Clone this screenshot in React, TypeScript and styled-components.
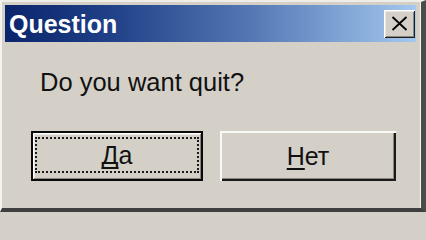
import styled, { createGlobalStyle } from 'styled-components'

const GlobalStyle = createGlobalStyle`
  html,
  body {
    margin: 0;
    padding: 0;
    background: #d4d0c8;
  }

  * {
    box-sizing: border-box;
  }
`

function CloseIcon() {
  return (
    <svg viewBox="0 0 17 15" width="17" height="15" fill="none" aria-hidden="true">
      <path d="M1.5 1L15.5 14M15.5 1L1.5 14" stroke="#000" strokeWidth="1.8" />
    </svg>
  )
}

export default function App() {
  return (
    <>
      <GlobalStyle />
      <Window role="dialog" aria-label="Question">
        <TitleBar>
          <Title>Question</Title>
          <CloseButton type="button" aria-label="Close">
            <CloseIcon />
          </CloseButton>
        </TitleBar>

        <Body>
          <Message>Do you want quit?</Message>
          <ButtonRow>
            <DialogButton type="button" $default $width={172}>
              <FocusRing>
                <Label>
                  <u>Д</u>а
                </Label>
              </FocusRing>
            </DialogButton>
            <DialogButton type="button" $width={176}>
              <Label>
                <u>Н</u>ет
              </Label>
            </DialogButton>
          </ButtonRow>
        </Body>
      </Window>
    </>
  )
}

const Window = styled.div`
  display: flex;
  flex-direction: column;
  width: 426px;
  height: 212px;
  padding: 3px 4px 0 3px;
  border-top: 2px solid #efede8;
  border-left: 2px solid #f3f2ee;
  border-right: 5px solid #4c4c4c;
  border-bottom: 4px solid #3f3f3f;
  background: #d4d0c8;
  box-shadow: inset -1px 0 0 #f4f3f0;
  font-family: 'Liberation Sans', Arial, sans-serif;
`

const TitleBar = styled.div`
  display: flex;
  height: 37px;
  align-items: center;
  justify-content: space-between;
  padding: 0 1px 0 4px;
  margin-right: 1px;
  background: linear-gradient(90deg, #0b256b 0%, #1f3f86 25%, #5478b4 60%, #a4c8ee 100%);
`

const Title = styled.span`
  color: #ffffff;
  font-size: 25px;
  font-weight: 700;
  line-height: 1;
  padding-top: 1px;
`

const CloseButton = styled.button`
  display: flex;
  width: 31px;
  height: 28px;
  align-items: center;
  justify-content: center;
  padding: 0;
  border: 0;
  background: #d4d0c8;
  box-shadow:
    inset 1px 1px 0 #ffffff,
    inset -1px -1px 0 #202020,
    inset 2px 2px 0 #e8e6e1,
    inset -2px -2px 0 #8a8780;
  cursor: pointer;
`

const Body = styled.div`
  display: flex;
  flex: 1;
  flex-direction: column;
  padding: 25px 0 0 35px;
`

const Message = styled.div`
  color: #111111;
  font-size: 25.5px;
  line-height: 30px;
`

const ButtonRow = styled.div`
  display: flex;
  gap: 17px;
  margin: 34px 0 0 -9px;
`

const DialogButton = styled.button<{ $default?: boolean; $width: number }>`
  display: flex;
  width: ${({ $width }) => $width}px;
  height: 50px;
  align-items: center;
  justify-content: center;
  padding: ${({ $default }) => ($default ? '6px 4px 8px' : '0')};
  border: 0;
  background: #d4d0c8;
  color: #111111;
  font-family: 'Liberation Sans', Arial, sans-serif;
  font-size: 25px;
  cursor: pointer;
  box-shadow: ${({ $default }) =>
    $default
      ? `inset 0 0 0 2px #0a0a0a,
         inset 3px 3px 0 #ffffff,
         inset -3px -3px 0 #8a8780,
         inset 4px 4px 0 #e9e7e2`
      : `inset 2px 2px 0 #f8f8f6,
         inset -2px -2px 0 #1a1a1a,
         inset -3px -3px 0 #8a8780`};
`

const FocusRing = styled.span`
  display: flex;
  align-self: stretch;
  flex: 1;
  align-items: center;
  justify-content: center;
  border: 2px dotted #1a1a1a;
`

const Label = styled.span`
  display: inline-block;
  line-height: 28px;

  u {
    text-decoration-thickness: 2px;
    text-decoration-skip-ink: none;
    text-underline-offset: 3px;
  }
`
